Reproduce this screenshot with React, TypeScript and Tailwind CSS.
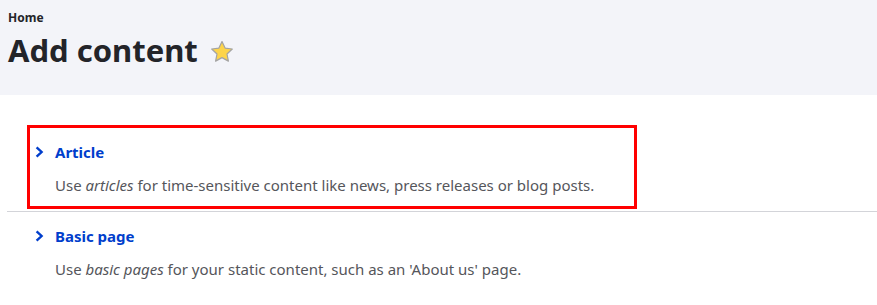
const font = { fontFamily: '"Noto Sans", "Open Sans", sans-serif' };

function Chevron() {
  return (
    <svg width="9" height="12" viewBox="0 0 9 12" className="shrink-0">
      <path d="M1.6 1.3L6.6 6l-5 4.7" fill="none" stroke="#003ecc" strokeWidth="2.4" />
    </svg>
  );
}

function Item({ title, children }: { title: string; children: React.ReactNode }) {
  return (
    <div className="pl-[5px]">
      <div className="flex items-center gap-[11px] h-[24px]">
        <Chevron />
        <a className="text-[15px] font-bold text-[#003ecc]">{title}</a>
      </div>
      <p className="mt-[11px] pl-[20px] text-[15px] text-[#55565b] leading-[20px]">{children}</p>
    </div>
  );
}

export default function App() {
  return (
    <div className="w-[877px] h-[305px] bg-white overflow-hidden" style={font}>
      <div className="h-[95px] bg-[#f3f4f9] px-2 pt-[10px]">
        <div className="text-[12px] font-bold text-[#232429] leading-[16px]">Home</div>
        <h1 className="flex items-center gap-[12px] mt-[4px] text-[31px] font-bold text-[#232429] leading-[40px]">
          Add content
          <svg width="24" height="23" viewBox="0 0 24 23" className="mt-[3px]">
            <path
              d="M12 1.5l3.1 6.6 7.2.9-5.3 5 1.4 7.1L12 17.6l-6.4 3.5 1.4-7.1-5.3-5 7.2-.9z"
              fill="#fdd44a"
              stroke="#a3a3a3"
              strokeWidth="1.2"
              strokeLinejoin="round"
            />
          </svg>
        </h1>
      </div>
      <div className="pl-[7px] pt-[30px]">
        <div className="ml-[20px] w-[610px] h-[84px] border-[3px] border-[#ff0000] pt-[12px]">
          <Item title="Article">
            Use <em>articles</em> for time-sensitive content like news, press releases or blog posts.
          </Item>
        </div>
        <div className="mt-[2px] border-t border-[#d3d4d9]" />
        <div className="ml-[23px] pt-[12px]">
          <Item title="Basic page">
            Use <em>basic pages</em> for your static content, such as an 'About us' page.
          </Item>
        </div>
      </div>
    </div>
  );
}
